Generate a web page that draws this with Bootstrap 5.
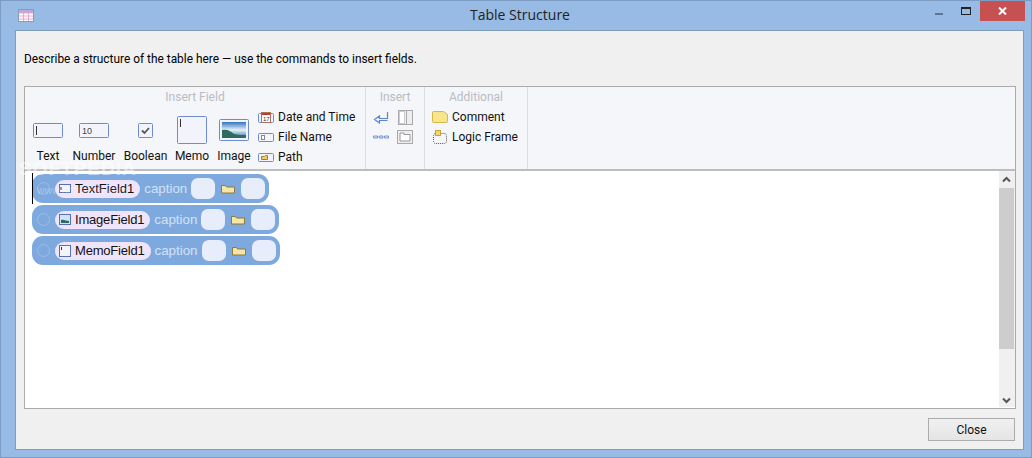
<!DOCTYPE html>
<html lang="en">
<head>
<meta charset="utf-8">
<title>Table Structure</title>
<link rel="stylesheet" href="https://cdn.jsdelivr.net/npm/bootstrap@5.3.0/dist/css/bootstrap.min.css">
<style>
html,body{height:458px;overflow:hidden}
body{background:#98bbe6;font-family:Roboto,"Open Sans",sans-serif;font-size:12px;color:#000;box-shadow:inset 0 0 0 1px #7c9cc4}
.win-title{height:30px;position:relative}
.win-name{font-family:"Open Sans",sans-serif;font-size:14px;line-height:30px;color:#222;padding-left:8px}
.win-ico{position:absolute;left:18px;top:9px}
.win-ctrl{position:absolute;top:1px;right:7px;height:20px}
.win-btn{width:27px;height:20px}
.win-close{width:45px;height:20px;background:#c75050}
.win-body{height:420px;margin:0 8px 8px 15px;background:#f0f0f0;border:1px solid #7f9db9;padding:0 7px 0 8px}
.desc{height:55px;padding-top:20px;line-height:16px;white-space:nowrap;font-size:11.9px}
.frame-box{height:323px;border:1px solid #ababab;background:#fff;overflow:hidden;position:relative}
.rib{height:84px;background:#f5f6f9;border-bottom:2px solid #bdbdbd}
.rib-grp{border-right:1px solid #dcdde0;height:100%}
.rib-t{color:#b9bcc2;text-align:center;line-height:16px;height:20px;padding-top:2px}
.g1{width:341px}.g2{width:59px;flex:none}.g3{width:103px}
.ins-body{padding-left:3px}
.ins-col{width:24px}
.add-body{padding-left:7px}
.big{height:60px;flex:none}
.b1{width:46px}.b2{width:46px}.b3{width:57px}.b4{width:36px}.b5{width:48px}
.big-ico{height:41px;padding-top:5px}
.big-l{line-height:16px;white-space:nowrap;color:#111;text-align:center;display:flex;justify-content:center}
.sm{height:20px;line-height:20px;white-space:nowrap;color:#111}
.work{height:236px;position:relative}
.rows{padding:3px 0 0 7px}
.frow{height:29px;background:#7ea9de;border-radius:11px;margin-bottom:2px;width:fit-content;padding:0 4px 0 5px;font-family:"Liberation Sans",Arial,sans-serif}
.radio-o{width:13px;height:13px;border:1px solid #9dbce6;border-radius:50%;flex:none;margin-right:5px}
.pill{height:18px;background:#f0e4fa;border-radius:9px;padding:0 6px 0 4px;font-size:13px;line-height:18px;color:#111}
.pill-tight{letter-spacing:-.2px}
.cap{font-size:13.33px;color:#d4e1f5;margin:0 4px}
.blank{width:24px;height:21px;background:#e8edfb;border-radius:7px}
.fold{width:26px}
.caret-l{position:absolute;left:7px;top:2px;width:1px;height:31px;background:#000}
.vbar{position:absolute;right:0;top:0;bottom:0;width:16px;background:#f0f0f0}
.vthumb{position:absolute;left:0;right:1px;top:17px;height:161px;background:#cdcdcd}
.v-up{position:absolute;left:3px;top:5px}
.v-dn{position:absolute;left:3px;bottom:3px}
.foot{height:41px;padding-top:9px}
.btn-close-w{width:87px;height:23px;margin-right:1px;border:1px solid #acacac;background:linear-gradient(#f0f0f0,#e5e5e5);border-radius:0;font-size:12px;line-height:20px;padding:0;color:#111}
.wm1{position:absolute;left:19px;top:159px;font-size:19px;line-height:1;font-weight:700;color:#fff;opacity:.5;letter-spacing:1px;font-family:"Liberation Sans",sans-serif;pointer-events:none}
.wm2{position:absolute;left:37px;top:183px;font-size:10.5px;color:#fff;opacity:.28;font-family:"Liberation Sans",sans-serif;pointer-events:none}
</style>
</head>
<body>
<div class="win-title text-center">
  <svg class="win-ico" width="16" height="13" viewBox="0 0 16 13"><rect x=".5" y=".5" width="15" height="12" fill="#fff" stroke="#8d9ab5"/><rect x="1" y="1" width="14" height="3" fill="#b9a9dc"/><path d="M1 4h14M1 7h14M1 10h14M5.500 4v8M10.500 4v8" stroke="#e8a8c8" fill="none"/></svg>
  <span class="win-name">Table Structure</span>
  <div class="win-ctrl d-flex">
    <div class="win-btn d-flex align-items-center justify-content-center"><svg width="9" height="9" viewBox="0 0 9 9"><rect y="6" width="8" height="2" fill="#5f7595"/></svg></div>
    <div class="win-btn d-flex align-items-center justify-content-center"><svg width="11" height="9" viewBox="0 0 11 9"><rect x=".5" y=".5" width="9" height="7" fill="none" stroke="#222"/><rect width="10" height="2" fill="#222"/></svg></div>
    <div class="win-close d-flex align-items-center justify-content-center"><svg width="9" height="8" viewBox="0 0 9 8"><path d="M1 .5l7 7M8 .5l-7 7" stroke="#fff" stroke-width="2" fill="none"/></svg></div>
  </div>
</div>
<div class="win-body">
  <div class="desc">Describe a structure of the table here — use the commands to insert fields.</div>
  <div class="frame-box">
    <div class="rib d-flex">
      <div class="rib-grp g1">
        <div class="rib-t">Insert Field</div>
        <div class="d-flex">
          <div class="big b1"><div class="big-ico d-flex justify-content-center align-items-center"><svg width="30" height="15" viewBox="0 0 30 15"><rect x=".5" y=".5" width="29" height="14" rx="1" fill="#f3f4fb" stroke="#6d8bd0"/><path d="M3.500 3v9" stroke="#333"/></svg></div><div class="big-l">Text</div></div>
          <div class="big b2"><div class="big-ico d-flex justify-content-center align-items-center"><svg width="30" height="15" viewBox="0 0 30 15"><rect x=".5" y=".5" width="29" height="14" rx="1" fill="#f3f4fb" stroke="#6d8bd0"/><text x="3" y="11" font-size="9" font-family="Liberation Sans" fill="#444">10</text></svg></div><div class="big-l">Number</div></div>
          <div class="big b3"><div class="big-ico d-flex justify-content-center align-items-center"><svg width="15" height="15" viewBox="0 0 15 15"><rect x=".5" y=".5" width="14" height="14" rx="1" fill="#f3f4fb" stroke="#6d8bd0"/><path d="M4 7.500l2.500 2.500 4.500-5" stroke="#555" stroke-width="1.800" fill="none"/></svg></div><div class="big-l">Boolean</div></div>
          <div class="big b4"><div class="big-ico d-flex justify-content-center align-items-center"><svg width="30" height="28" viewBox="0 0 30 28"><rect x=".5" y=".5" width="29" height="27" rx="1" fill="#f3f4fb" stroke="#6d8bd0"/><path d="M3.500 3v8" stroke="#333"/></svg></div><div class="big-l">Memo</div></div>
          <div class="big b5"><div class="big-ico d-flex justify-content-center align-items-center"><svg width="30" height="22" viewBox="0 0 30 22"><defs><linearGradient id="sk" x1="0" y1="0" x2="0" y2="1"><stop offset="0" stop-color="#2f74c0"/><stop offset=".5" stop-color="#e6f1f8"/><stop offset="1" stop-color="#2f6fa5"/></linearGradient></defs><rect x=".5" y=".5" width="29" height="21" rx="1" fill="#f3f4fb" stroke="#6d8bd0"/><rect x="3" y="3" width="24" height="16" fill="url(#sk)"/><path d="M3 11c6-1 8 1 12 4 4 1 8 1 12 1v3H3z" fill="#2e6b5e"/></svg></div><div class="big-l">Image</div></div>
          <div>
            <div class="sm d-flex align-items-center gap-1"><svg width="16" height="13" viewBox="0 0 16 13"><rect x=".5" y="2.500" width="15" height="9" rx="1" fill="#f3f4fb" stroke="#6d8bd0"/><rect x="3.500" y="1.500" width="9" height="10" fill="#fff" stroke="#b0705a"/><path d="M4 3h8" stroke="#c8392b" stroke-width="2"/><text x="5" y="10" font-size="6" fill="#333" font-family="Liberation Sans">17</text></svg>Date and Time</div>
            <div class="sm d-flex align-items-center gap-1"><svg width="16" height="9" viewBox="0 0 16 9"><rect x=".5" y=".5" width="15" height="8" rx="1" fill="#f3f4fb" stroke="#6d8bd0"/><rect x="3.500" y="2.500" width="3" height="4" fill="#fff" stroke="#888"/></svg>File Name</div>
            <div class="sm d-flex align-items-center gap-1"><svg width="16" height="9" viewBox="0 0 16 9"><rect x=".5" y=".5" width="15" height="8" rx="1" fill="#f3f4fb" stroke="#6d8bd0"/><path d="M3.500 3.500h3l1-1h2v4h-6z" fill="#f2cf62" stroke="#a5802e"/></svg>Path</div>
          </div>
        </div>
      </div>
      <div class="rib-grp g2">
        <div class="rib-t">Insert</div>
        <div class="d-flex gap-1 ins-body">
          <div class="d-flex flex-column align-items-center ins-col">
            <div class="sm d-flex align-items-center"><svg width="16" height="13" viewBox="0 0 16 13"><path d="M14.500 1v6.500H6.500V5L1.500 8.500l5 3.500V9.500h8" fill="#eef2fb" stroke="#5f84cf" stroke-width="1.200"/></svg></div>
            <div class="sm d-flex align-items-center"><svg width="16" height="5" viewBox="0 0 16 5"><path d="M.5 1h4v2h-4zM6 1h4v2H6zM11.500 1h4v2h-4z" fill="#dfe7f8" stroke="#5f84cf" stroke-width=".8"/></svg></div>
          </div>
          <div class="d-flex flex-column align-items-center">
            <div class="sm d-flex align-items-center"><svg width="15" height="15" viewBox="0 0 15 15"><rect x=".5" y=".5" width="14" height="14" fill="#eee" stroke="#aaa"/><rect x="1.500" y="1.500" width="5" height="12" fill="#fff" stroke="#ccc"/><path d="M8.500 1v13" stroke="#aaa"/></svg></div>
            <div class="sm d-flex align-items-center"><svg width="16" height="14" viewBox="0 0 16 14"><rect x=".5" y=".5" width="15" height="13" fill="#eee" stroke="#aaa"/><path d="M3 11V3h4v1.500h6V11z" fill="#fff" stroke="#999"/></svg></div>
          </div>
        </div>
      </div>
      <div class="rib-grp g3">
        <div class="rib-t">Additional</div>
        <div class="add-body">
          <div class="sm d-flex align-items-center gap-1"><svg width="16" height="12" viewBox="0 0 16 12"><path d="M.5 1.500q0-1 1-1h10l4 3v7q0 1-1 1h-13q-1 0-1-1z" fill="#f8e58c" stroke="#d3b84a"/></svg>Comment</div>
          <div class="sm d-flex align-items-center gap-1"><svg width="16" height="14" viewBox="0 0 16 14"><rect x="1.500" y="3.500" width="13" height="10" rx="2" fill="none" stroke="#555" stroke-dasharray="1 1"/><rect x="3.500" y=".5" width="5" height="5" fill="#f2d868" stroke="#c5a53a"/></svg>Logic Frame</div>
        </div>
      </div>
    </div>
    <div class="work">
      <div class="rows">
        <div class="frow d-flex align-items-center">
          <span class="radio-o"></span>
          <span class="pill d-inline-flex align-items-center gap-1"><svg width="12" height="9" viewBox="0 0 12 9"><rect x=".5" y=".5" width="11" height="8" fill="#f3f4fb" stroke="#5570b8"/><path d="M2 3v3" stroke="#333"/></svg>TextField1</span>
          <span class="cap">caption</span>
          <span class="blank"></span>
          <span class="fold d-flex justify-content-center"><svg width="14" height="10" viewBox="0 0 14 10"><path d="M.5 3V1.500h4l1 1.500h8v6H.5z" fill="#f7e6a6" stroke="#8f7a3a"/></svg></span>
          <span class="blank"></span>
        </div>
        <div class="frow d-flex align-items-center">
          <span class="radio-o"></span>
          <span class="pill pill-tight d-inline-flex align-items-center gap-1"><svg width="12" height="11" viewBox="0 0 12 11"><rect x=".5" y=".5" width="11" height="10" fill="#cfe3f3" stroke="#5570b8"/><path d="M2 6c3-1 5 1 8 1v2H2z" fill="#2e6b5e"/></svg>ImageField1</span>
          <span class="cap">caption</span>
          <span class="blank"></span>
          <span class="fold d-flex justify-content-center"><svg width="14" height="10" viewBox="0 0 14 10"><path d="M.5 3V1.500h4l1 1.500h8v6H.5z" fill="#f7e6a6" stroke="#8f7a3a"/></svg></span>
          <span class="blank"></span>
        </div>
        <div class="frow d-flex align-items-center">
          <span class="radio-o"></span>
          <span class="pill pill-tight d-inline-flex align-items-center gap-1"><svg width="12" height="12" viewBox="0 0 12 12"><rect x=".5" y=".5" width="11" height="11" fill="#f3f4fb" stroke="#5570b8"/><path d="M2.500 2v3" stroke="#333"/></svg>MemoField1</span>
          <span class="cap">caption</span>
          <span class="blank"></span>
          <span class="fold d-flex justify-content-center"><svg width="14" height="10" viewBox="0 0 14 10"><path d="M.5 3V1.500h4l1 1.500h8v6H.5z" fill="#f7e6a6" stroke="#8f7a3a"/></svg></span>
          <span class="blank"></span>
        </div>
      </div>
      <div class="caret-l"></div>
      <div class="vbar">
        <svg class="v-up" width="9" height="7" viewBox="0 0 9 7"><path d="M1 5.500l3.500-3.500 3.500 3.500" fill="none" stroke="#555" stroke-width="2"/></svg>
        <div class="vthumb"></div>
        <svg class="v-dn" width="9" height="7" viewBox="0 0 9 7"><path d="M1 1.500l3.500 3.500 3.500-3.500" fill="none" stroke="#555" stroke-width="2"/></svg>
      </div>
    </div>
  </div>
  <div class="foot d-flex justify-content-end"><button type="button" class="btn btn-close-w">Close</button></div>
</div>
<div class="wm1">SOFTPEDIA</div>
<div class="wm2">www.softpedia.com</div>
<script src="https://cdn.jsdelivr.net/npm/bootstrap@5.3.0/dist/js/bootstrap.bundle.min.js"></script>
</body>
</html>
